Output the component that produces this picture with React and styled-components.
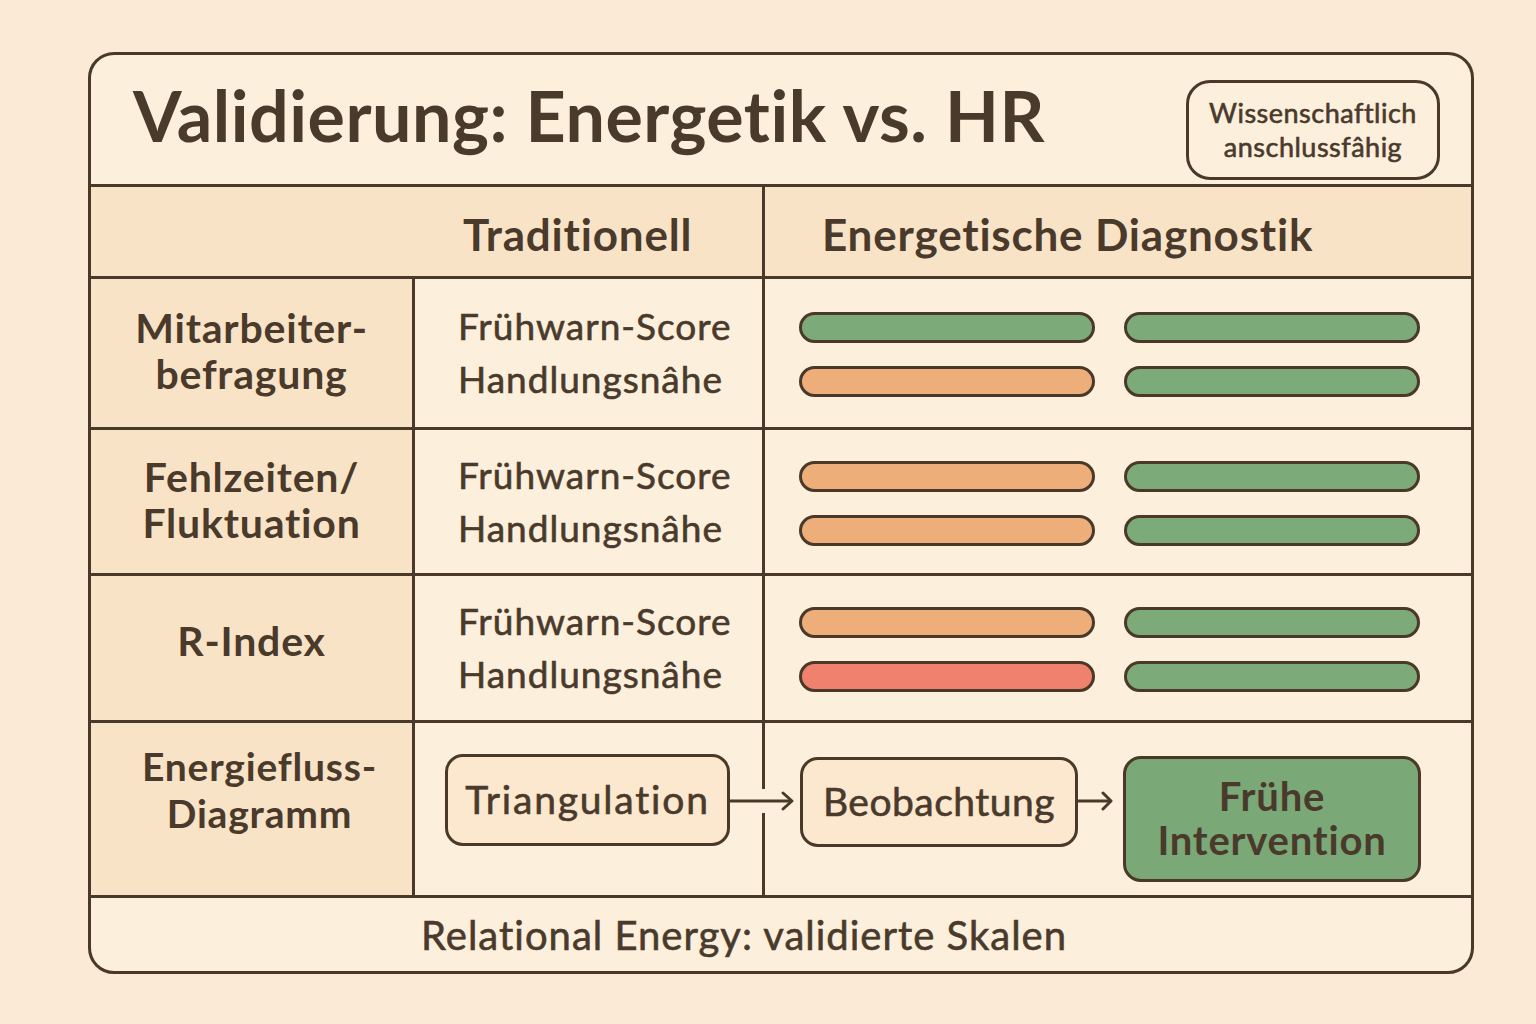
import React from "react";
import styled, { createGlobalStyle } from "styled-components";

const INK = "#4a3829";
const LIGHT = "#fcefdc";
const DARK = "#f9e3c6";

const GlobalStyle = createGlobalStyle`
  html, body {
    margin: 0;
    padding: 0;
    background: #fbebd6;
  }
  body {
    font-family: "Lato", "Noto Sans", sans-serif;
    font-variant-ligatures: none;
    color: #4a3a2c;
  }
  #root {
    width: 1536px;
    height: 1024px;
    overflow: hidden;
  }
`;

const Frame = styled.div`
  margin: 52px 0 0 88px;
  width: 1386px;
  box-sizing: border-box;
  border: 3px solid ${INK};
  border-radius: 26px;
  overflow: hidden;
  display: grid;
  grid-template-columns: 321px 347px 706px;
  grid-template-rows: 129px 89px 148px 143px 144px 172px 73px;
  gap: 3px;
  background: ${INK};
`;

const TitleRow = styled.div`
  grid-column: 1 / -1;
  background: ${LIGHT};
  display: flex;
  justify-content: space-between;
  align-items: center;
  padding: 0 31px 0 42px;
`;

const Title = styled.h1`
  margin: 0 0 10px;
  font-size: 70px;
  font-weight: 700;
  letter-spacing: 0.5px;
`;

const Badge = styled.div`
  align-self: flex-end;
  margin-bottom: 4px;
  width: 254px;
  height: 100px;
  box-sizing: border-box;
  border: 3px solid ${INK};
  border-radius: 24px;
  display: flex;
  flex-direction: column;
  align-items: center;
  justify-content: center;
  font-size: 27px;
  line-height: 34px;
  letter-spacing: 0.5px;
  -webkit-text-stroke: 0.6px currentColor;
  text-align: center;
`;

const HeadCell = styled.div`
  grid-column: ${(p) => p.$span || "auto"};
  background: ${DARK};
  display: flex;
  align-items: center;
  padding-left: ${(p) => p.$pad}px;
  padding-top: 4px;
  font-size: 44px;
  font-weight: 700;
  letter-spacing: 0.8px;
`;

const LabelCell = styled.div`
  background: ${DARK};
  display: flex;
  flex-direction: column;
  align-items: center;
  justify-content: center;
  text-align: center;
  font-size: ${(p) => p.$fs || 41}px;
  font-weight: 700;
  letter-spacing: 0.8px;
  line-height: ${(p) => p.$lh || 46}px;
  padding-bottom: ${(p) => p.$lift || 4}px;
  padding-left: ${(p) => p.$shift || 0}px;
`;

const TextCell = styled.div`
  background: ${LIGHT};
  display: flex;
  flex-direction: column;
  justify-content: center;
  padding-left: 43px;
  font-size: 37px;
  letter-spacing: 1px;
  -webkit-text-stroke: 0.6px currentColor;
  line-height: 53px;
  padding-bottom: 2px;
`;

const BarCell = styled.div`
  background: ${LIGHT};
  display: grid;
  grid-template-columns: 296px 296px;
  grid-auto-rows: 31px;
  column-gap: 29px;
  row-gap: 23px;
  align-content: center;
  padding-left: 34px;
  padding-top: 3px;
`;

const BAR_COLORS = {
  green: "#7caa79",
  orange: "#edae7a",
  red: "#f0816f",
};

const Bar = styled.div`
  box-sizing: border-box;
  border: 3px solid ${INK};
  border-radius: 16px;
  background: ${(p) => BAR_COLORS[p.$tone]};
`;

const FlowCell = styled.div`
  position: relative;
  background: ${LIGHT};
  display: flex;
  align-items: flex-start;
  padding: ${(p) => p.$top}px 0 0 ${(p) => p.$left}px;
`;

const FlowBox = styled.div`
  box-sizing: border-box;
  width: ${(p) => p.$w}px;
  height: ${(p) => p.$h}px;
  margin-top: ${(p) => p.$mt || 0}px;
  border: 3px solid ${INK};
  border-radius: 18px;
  background: ${(p) => (p.$green ? "#7aa877" : "#fbe8cf")};
  display: flex;
  align-items: center;
  justify-content: center;
  text-align: center;
  font-size: ${(p) => (p.$green ? 40 : 39)}px;
  font-weight: ${(p) => (p.$green ? 700 : 400)};
  letter-spacing: ${(p) => p.$ls || 0.5}px;
  -webkit-text-stroke: ${(p) => (p.$green ? 0 : 0.6)}px currentColor;
  line-height: 44px;
  padding-bottom: 3px;
`;

const CrossArrow = styled.svg`
  position: absolute;
  left: 314px;
  top: 66px;
  z-index: 1;
  overflow: visible;
`;

const Arrow = styled.svg`
  flex: none;
  margin-top: 33px;
  margin-right: 10px;
`;

const Footer = styled.div`
  grid-column: 1 / -1;
  background: ${LIGHT};
  display: flex;
  align-items: center;
  padding-left: 330px;
  font-size: 40px;
  letter-spacing: 1px;
  -webkit-text-stroke: 0.6px currentColor;
`;

const rows = [
  { label: ["Mitarbeiter-", "befragung"], bars: ["green", "green", "orange", "green"] },
  { label: ["Fehlzeiten/", "Fluktuation"], bars: ["orange", "green", "orange", "green"] },
  { label: ["R-Index"], bars: ["orange", "green", "red", "green"] },
];

export default function App() {
  return (
    <>
      <GlobalStyle />
      <Frame>
        <TitleRow>
          <Title>Validierung: Energetik vs. HR</Title>
          <Badge>
            <span>Wissenschaftlich</span>
            <span>anschlussfâhig</span>
          </Badge>
        </TitleRow>

        <HeadCell $span="1 / 3" $pad={372}>Traditionell</HeadCell>
        <HeadCell $pad={57}>Energetische Diagnostik</HeadCell>

        {rows.map((row) => (
          <React.Fragment key={row.label[0]}>
            <LabelCell $lift={row.label.length === 1 ? 14 : 4}>
              {row.label.map((l) => (
                <span key={l}>{l}</span>
              ))}
            </LabelCell>
            <TextCell>
              <span>Frühwarn-Score</span>
              <span>Handlungsnâhe</span>
            </TextCell>
            <BarCell>
              {row.bars.map((tone, i) => (
                <Bar key={i} $tone={tone} />
              ))}
            </BarCell>
          </React.Fragment>
        ))}

        <LabelCell $fs={39} $lh={47} $lift={38} $shift={16}>
          <span>Energiefluss-</span>
          <span>Diagramm</span>
        </LabelCell>
        <FlowCell $top={31} $left={30}>
          <FlowBox $w={285} $h={92} $ls={1.8}>Triangulation</FlowBox>
          <CrossArrow width="66" height="24" viewBox="0 0 66 24">
            <rect x="31" y="0" width="8" height="24" fill={LIGHT} />
            <path d="M0 12 H62" stroke={INK} strokeWidth="3" fill="none" />
            <path d="M54 4 L63 12 L54 20" stroke={INK} strokeWidth="3" fill="none" strokeLinecap="round" strokeLinejoin="round" />
          </CrossArrow>
        </FlowCell>
        <FlowCell $top={33} $left={35}>
          <FlowBox $w={278} $h={90} $mt={1}>Beobachtung</FlowBox>
          <Arrow width="35" height="24" viewBox="0 0 35 24">
            <path d="M0 12 H32" stroke={INK} strokeWidth="3" fill="none" />
            <path d="M25 4 L33 12 L25 20" stroke={INK} strokeWidth="3" fill="none" strokeLinecap="round" strokeLinejoin="round" />
          </Arrow>
          <FlowBox $green $w={298} $h={126} $ls={0.8}>
            Frühe
            <br />
            Intervention
          </FlowBox>
        </FlowCell>

        <Footer>Relational Energy: validierte Skalen</Footer>
      </Frame>
    </>
  );
}
